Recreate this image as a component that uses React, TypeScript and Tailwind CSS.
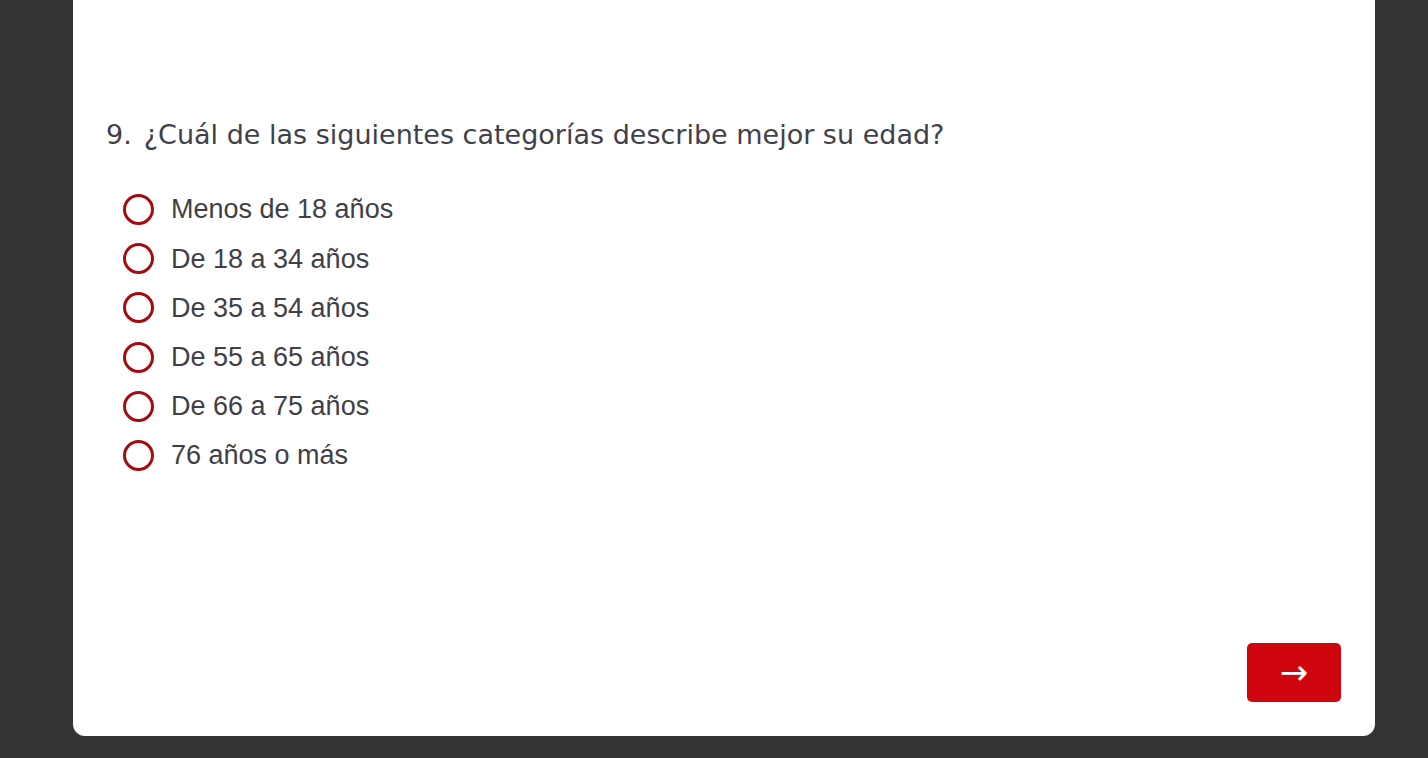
import React from "react";

const options = [
  "Menos de 18 años",
  "De 18 a 34 años",
  "De 35 a 54 años",
  "De 55 a 65 años",
  "De 66 a 75 años",
  "76 años o más",
];

export default function App() {
  return (
    <div className="w-[1428px] h-[758px] bg-[#333333] overflow-hidden pl-[73px] pr-[53px]">
      <div className="bg-white rounded-[12px] -mt-[12px] h-[748px] flex flex-col pt-[12px]">
        <div className="pl-[34px] pt-[119px]">
          <h1 className="text-[#404148] text-[27px] leading-[32px] font-['DejaVu_Sans',sans-serif] flex gap-[12px] -ml-[1px]">
            <span>9.</span>
            <span>¿Cuál de las siguientes categorías describe mejor su edad?</span>
          </h1>
          <div className="mt-[34px] pl-[16px] flex flex-col">
            {options.map((o) => (
              <label key={o} className="flex items-center h-[49.2px] gap-[17px] font-['Liberation_Sans',sans-serif] text-[27px] text-[#3f4047]">
                <span className="w-[31px] h-[31px] rounded-full border-[3px] border-[#a30d12] shrink-0" />
                <span>{o}</span>
              </label>
            ))}
          </div>
        </div>
        <div className="flex-1" />
        <div className="flex justify-end pr-[34px] pb-[34px]">
          <button className="w-[94px] h-[59px] bg-[#d0060f] rounded-[5px] text-white text-[34px] leading-none font-['DejaVu_Sans',sans-serif] flex items-center justify-center pb-[2px]">
            →
          </button>
        </div>
      </div>
    </div>
  );
}
